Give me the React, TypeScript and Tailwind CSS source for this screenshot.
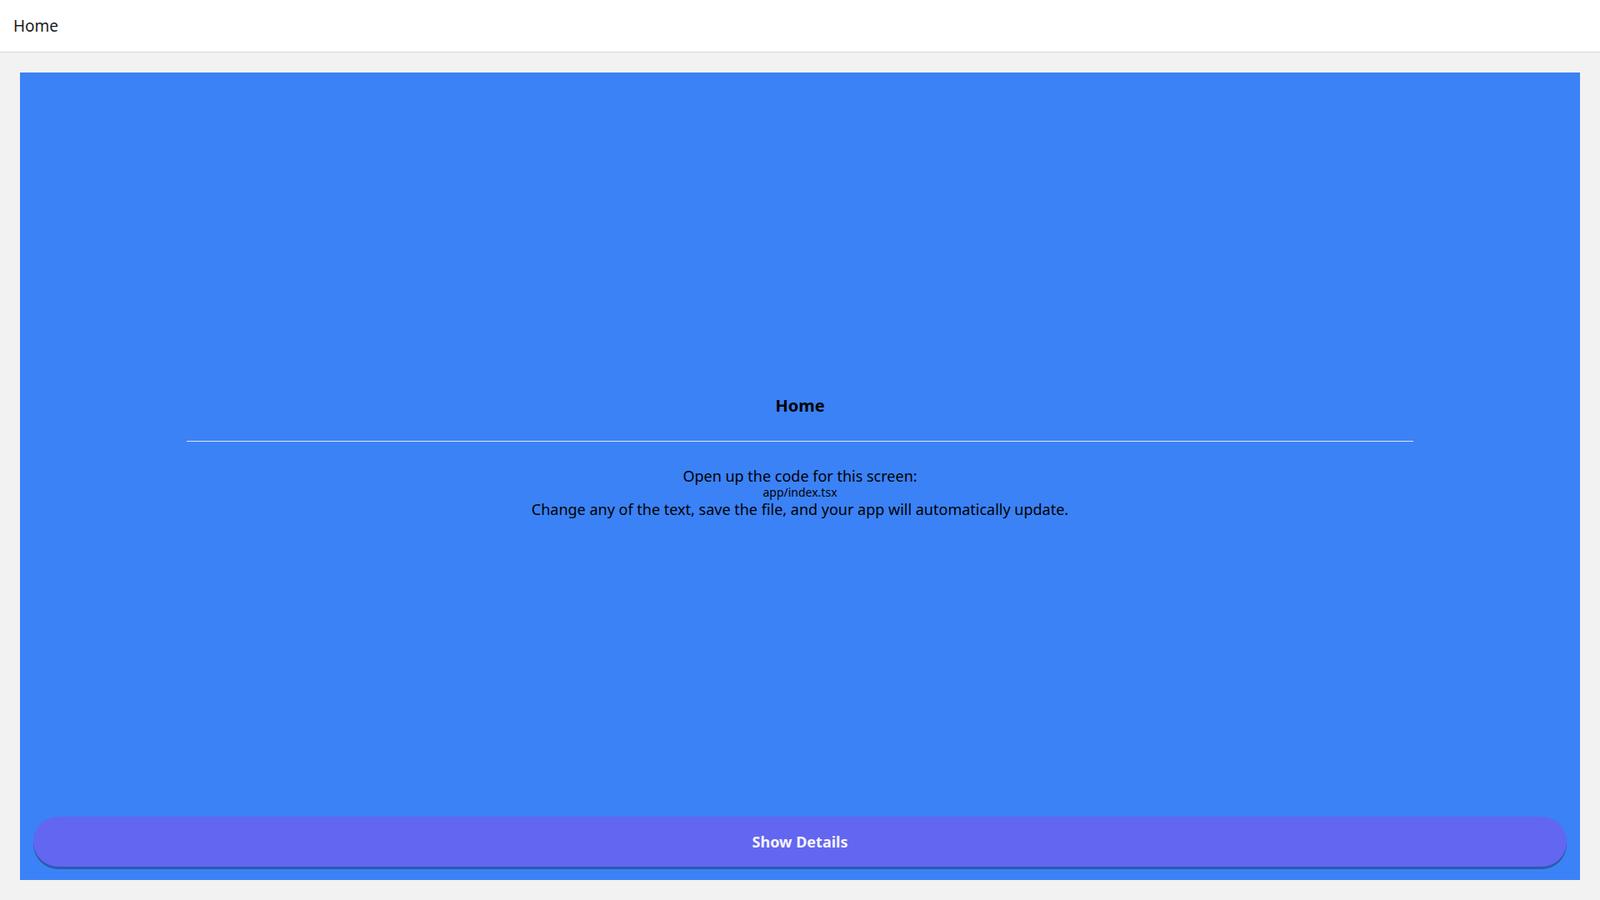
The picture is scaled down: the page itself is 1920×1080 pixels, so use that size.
export default function App() {
  return (
    <div className="flex h-screen flex-col bg-[#f2f2f2] font-['Liberation_Sans',Arial,sans-serif] text-black">
      <header className="flex h-[63px] shrink-0 items-center border-b border-[#d8d8d8] bg-white px-4">
        <span className="text-[19px] text-[#1c1c1c]">Home</span>
      </header>
      <main className="flex flex-1 px-6 pt-6 pb-6">
        <div className="flex flex-1 flex-col bg-[#3b82f6]">
          <div className="flex flex-1 flex-col items-center justify-center pt-[30px]">
            <h1 className="text-[20px] font-bold leading-6">Home</h1>
            <div className="mt-[30px] mb-[30px] h-px w-[1472px] bg-[#dbe6fb]" />
            <p className="text-[18px] leading-[22px]">Open up the code for this screen:</p>
            <p className="text-[14px] leading-[18px]">app/index.tsx</p>
            <p className="text-[18px] leading-[22px]">Change any of the text, save the file, and your app will automatically update.</p>
          </div>
          <div className="px-4 pb-4">
            <button className="h-[60px] w-full rounded-[30px] bg-[#6366f1] text-[18px] font-bold text-[#f5f5ff] shadow-[0_3px_0_#2a5bb0]">
              Show Details
            </button>
          </div>
        </div>
      </main>
    </div>
  );
}
